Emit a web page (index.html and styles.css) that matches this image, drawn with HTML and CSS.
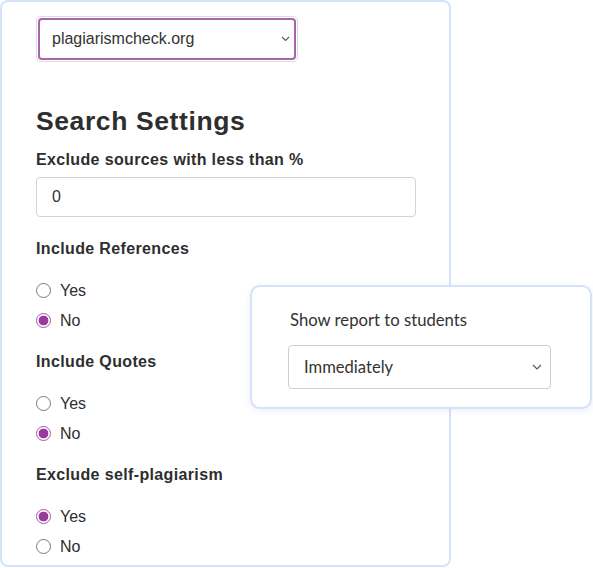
FILE: index.html
```html
<!DOCTYPE html>
<html lang="en">
<head>
<meta charset="utf-8">
<title>Search Settings</title>
<link rel="stylesheet" href="styles.css">
</head>
<body>
<div class="stage">
  <div class="panel">
    <div class="select-ring">
      <div class="select select--focus">
        <span class="select-text">plagiarismcheck.org</span>
        <svg class="chev" width="9" height="6" viewBox="0 0 9 6"><path d="M1 1 L4.5 4.5 L8 1" fill="none" stroke="#555" stroke-width="1.1"/></svg>
      </div>
    </div>

    <h2 class="title">Search Settings</h2>

    <div class="field-label">Exclude sources with less than %</div>
    <div class="text-input">0</div>

    <div class="group">
      <div class="field-label">Include References</div>
      <div class="radios">
        <label class="radio"><span class="dot"></span>Yes</label>
        <label class="radio"><span class="dot dot--on"></span>No</label>
      </div>
    </div>

    <div class="group">
      <div class="field-label">Include Quotes</div>
      <div class="radios">
        <label class="radio"><span class="dot"></span>Yes</label>
        <label class="radio"><span class="dot dot--on"></span>No</label>
      </div>
    </div>

    <div class="group">
      <div class="field-label">Exclude self-plagiarism</div>
      <div class="radios">
        <label class="radio"><span class="dot dot--on"></span>Yes</label>
        <label class="radio"><span class="dot"></span>No</label>
      </div>
    </div>
  </div>

  <div class="card">
    <div class="card-label">Show report to students</div>
    <div class="select select--plain">
      <span class="select-text">Immediately</span>
      <svg class="chev" width="10" height="6" viewBox="0 0 10 6"><path d="M1 1 L5 5 L9 1" fill="none" stroke="#555" stroke-width="1.1"/></svg>
    </div>
  </div>
</div>
</body>
</html>
```

FILE: styles.css
```css
* { box-sizing: border-box; }
html, body { margin: 0; padding: 0; background: #fff; }
body {
  font-family: "Liberation Sans", Arial, Helvetica, sans-serif;
  color: #2e2e2e;
}
.stage {
  position: relative;
  width: 593px;
  height: 568px;
}
.panel {
  width: 451px;
  height: 567px;
  border: 2px solid #d6e1fb;
  border-radius: 8px;
  padding: 14px 0 0 34px;
}
.select-ring {
  width: 262px;
  border: 1px solid #dcdcdc;
  border-radius: 5px;
  padding: 1px;
}
.select {
  display: flex;
  align-items: center;
  justify-content: space-between;
  background: #fff;
}
.select--focus {
  height: 42px;
  border: 2px solid #a763ab;
  border-radius: 4px;
  padding: 0 4px 0 12px;
  font-size: 16px;
  color: #333;
}
.title {
  margin: 44px 0 13px;
  font-size: 26.5px;
  line-height: 31px;
  font-weight: bold;
  letter-spacing: 0.6px;
  color: #2e2e2e;
}
.field-label {
  font-size: 16px;
  line-height: 20px;
  font-weight: bold;
  letter-spacing: 0.36px;
  color: #2e2e2e;
}
.text-input {
  margin-top: 7px;
  width: 380px;
  height: 40px;
  border: 1px solid #d2d2d2;
  border-radius: 4px;
  padding: 0 15px;
  display: flex;
  align-items: center;
  font-size: 16px;
  color: #333;
}
.group { margin-top: 22px; }
.group + .group { margin-top: 16px; }
.radios {
  margin-top: 17px;
  display: flex;
  flex-direction: column;
}
.radio {
  height: 30px;
  display: flex;
  align-items: center;
  gap: 9px;
  font-size: 16px;
  color: #2e2e2e;
}
.dot {
  width: 15px;
  height: 15px;
  border-radius: 50%;
  border: 1px solid #7a7a7a;
  background: #fff;
  flex: none;
  margin-top: -1px;
}
.dot--on {
  border-color: #a458a8;
  background: radial-gradient(circle, #9a3a9f 0 4.6px, #fff 5.2px);
}
.card {
  position: absolute;
  left: 250px;
  top: 285px;
  width: 342px;
  height: 124px;
  background: #fff;
  border: 2px solid #d6e1fb;
  border-radius: 10px;
  box-shadow: 0 2px 6px rgba(150, 170, 220, 0.18);
  padding: 23px 39px 0 36px;
  font-family: Lato, "Liberation Sans", sans-serif;
}
.card-label {
  font-size: 16.7px;
  line-height: 20px;
  color: #333;
  padding-left: 2px;
}
.select--plain {
  margin-top: 15px;
  width: 263px;
  height: 44px;
  border: 1px solid #cfcfcf;
  border-radius: 4px;
  padding: 0 8px 0 15px;
  font-size: 16.6px;
  color: #333;
}
.chev { flex: none; }
```
